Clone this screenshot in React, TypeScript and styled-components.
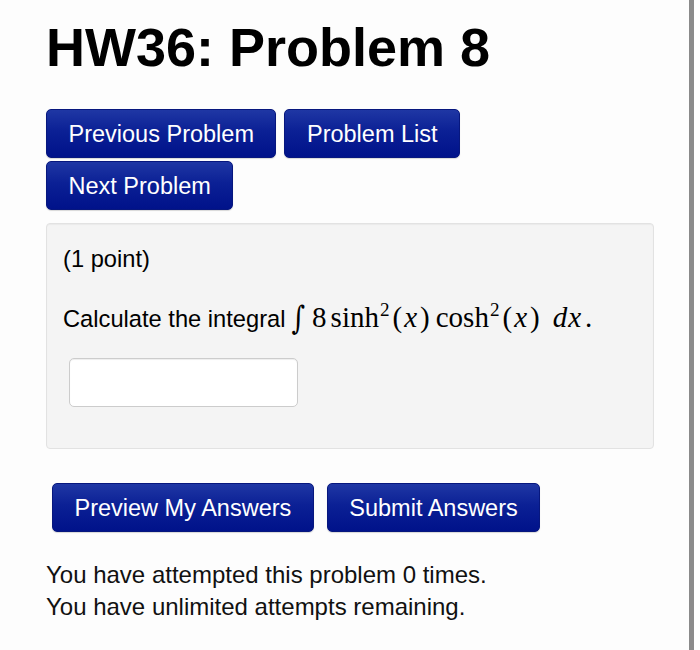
import React from "react";
import styled, { createGlobalStyle } from "styled-components";

const Global = createGlobalStyle`
  html, body { margin: 0; padding: 0; }
  body {
    background: #fdfdfd;
    font-family: "Liberation Sans", Arial, Helvetica, sans-serif;
    color: #000;
  }
`;

const Page = styled.div`
  display: flex;
  height: 650px;
  overflow: hidden;
`;

const Main = styled.main`
  flex: 1;
  padding: 20px 0 0 46px;
`;

const ScrollRail = styled.div`
  flex: none;
  width: 5px;
  margin-right: 6px;
  background: #8a8a8a;
`;

const Title = styled.h1`
  margin: 0;
  font-size: 54px;
  line-height: 54px;
  font-weight: 700;
  color: #000;
`;

const Nav = styled.nav`
  display: flex;
  flex-wrap: wrap;
  gap: 3px 8px;
  margin-top: 35px;
  max-width: 470px;
`;

const Button = styled.button`
  box-sizing: border-box;
  height: 49px;
  padding: 1px 21.5px 0;
  display: inline-flex;
  align-items: center;
  justify-content: center;
  font-family: "Liberation Sans", Arial, Helvetica, sans-serif;
  font-size: 23.5px;
  color: #fff;
  background: linear-gradient(to bottom, #1f37a4 0%, #0b2095 45%, #00128a 100%);
  border: 1px solid #07177e;
  border-radius: 5px;
  box-shadow: 0 1px 1px rgba(0, 0, 0, 0.15);
  white-space: nowrap;
  cursor: pointer;
`;

const Panel = styled.section`
  box-sizing: border-box;
  width: 608px;
  margin-top: 13px;
  padding: 19px 16px 41px;
  background: #f4f4f4;
  border: 1px solid #e2e2e2;
  border-radius: 4px;
  box-shadow: inset 0 1px 1px rgba(0, 0, 0, 0.04);
`;

const Para = styled.p<{ $gap: number }>`
  margin: 0 0 ${(p) => p.$gap}px;
  font-size: 23.7px;
  line-height: 32px;
`;

const Math = styled.span`
  font-family: "Liberation Serif", "Times New Roman", serif;
  font-size: 29px;
  line-height: 1;
  margin-left: 6px;
`;

const Integral = styled.span`
  font-family: "DejaVu Serif", serif;
  font-size: 26px;
  margin-right: 7px;
  display: inline-block;
  transform: scaleY(1.25);
`;

const Up = styled.span<{ $ml?: number }>`
  margin-left: ${(p) => p.$ml ?? 0}px;
`;

const It = styled.span<{ $ml?: number }>`
  font-style: italic;
  margin-left: ${(p) => p.$ml ?? 0}px;
`;

const Sup = styled.sup`
  font-size: 0.66em;
  line-height: 0;
  vertical-align: baseline;
  position: relative;
  top: -0.55em;
  margin: 0 3px 0 1px;
`;

const AnswerInput = styled.input`
  display: block;
  box-sizing: border-box;
  width: 229px;
  height: 49px;
  margin-left: 6px;
  border: 1px solid #cccccc;
  border-radius: 5px;
  background: #fff;
  box-shadow: inset 0 1px 1px rgba(0, 0, 0, 0.07);
  font-size: 20px;
`;

const Actions = styled.div`
  display: flex;
  gap: 13px;
  margin: 34px 0 0 6px;
`;

const Status = styled.div`
  margin-top: 27px;
  font-size: 24px;
  line-height: 32px;
  color: #111;
`;

export default function App() {
  return (
    <>
      <Global />
      <Page>
        <Main>
          <Title>HW36: Problem 8</Title>
          <Nav>
            <Button>Previous Problem</Button>
            <Button>Problem List</Button>
            <Button>Next Problem</Button>
          </Nav>
          <Panel>
            <Para $gap={28}>(1 point)</Para>
            <Para $gap={23}>
              Calculate the integral
              <Math>
                <Integral>∫</Integral>
                <Up>8</Up>
                <Up $ml={4}>sinh</Up>
                <Sup>2</Sup>
                <Up>(</Up>
                <It $ml={2}>x</It>
                <Up $ml={3}>)</Up>
                <Up $ml={6}>cosh</Up>
                <Sup>2</Sup>
                <Up>(</Up>
                <It $ml={2}>x</It>
                <Up $ml={3}>)</Up>
                <It $ml={13}>d</It>
                <It $ml={1}>x</It>
                <Up $ml={4}>.</Up>
              </Math>
            </Para>
            <AnswerInput type="text" aria-label="answer" />
          </Panel>
          <Actions>
            <Button>Preview My Answers</Button>
            <Button>Submit Answers</Button>
          </Actions>
          <Status>
            You have attempted this problem 0 times.
            <br />
            You have unlimited attempts remaining.
          </Status>
        </Main>
        <ScrollRail />
      </Page>
    </>
  );
}
